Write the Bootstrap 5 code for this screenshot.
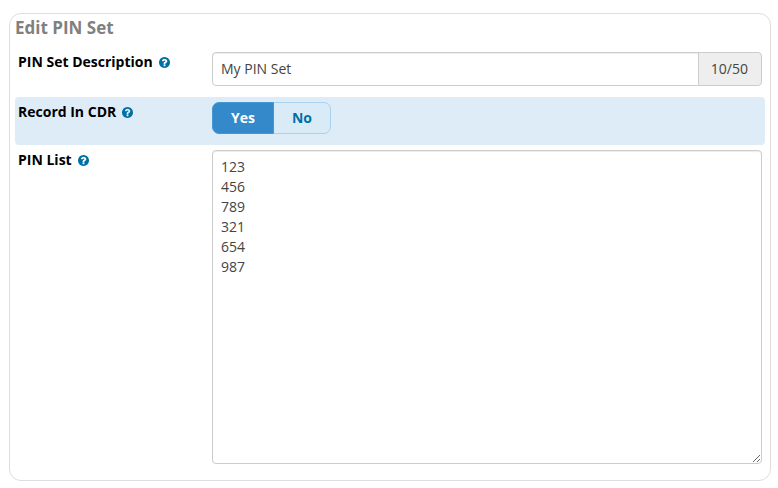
<!DOCTYPE html>
<html lang="en">
<head>
<meta charset="utf-8">
<meta name="viewport" content="width=device-width, initial-scale=1">
<title>Edit PIN Set</title>
<link href="https://cdn.jsdelivr.net/npm/bootstrap@5.3.0/dist/css/bootstrap.min.css" rel="stylesheet">
<style>
body { font-family: "Open Sans", "Noto Sans", sans-serif; font-size: 14px; line-height: 20px; color: #000; padding: 13px 7px 7px 9px; }
.pin-panel { border: 1px solid #ddd; border-radius: 12px; padding: 4px 5px 11px; }
.pin-title { font-size: 17px; line-height: 20px; font-weight: 700; color: #808080; margin-bottom: 9px; }
.pin-row { padding: 5px 3px; border-radius: 4px; }
.pin-row-active { background: #deecf7; height: 48px; margin-top: 6px; }
.pin-label { flex: 0 0 194px; }
.pin-label label, .pin-label .pin-legend { font-weight: 700; }
.help-link { color: #0070a3; margin-left: 6px; line-height: 0; }
.form-control, .input-group-text { font-size: 14px; line-height: 20px; color: #444; border-color: #ccc; border-radius: 4px; }
.form-control { padding: 6px 8px; box-shadow: inset 0 1px 1px rgba(0,0,0,.075); }
.input-group-text { background: #eee; padding: 6px 13px 6px 12px; }
.pin-toggle .btn { font-size: 14px; line-height: 20px; font-weight: 700; padding: 5px 18px; border-radius: 7px; color: #0070a3; background: #daebf8; border-color: #a9d2ee; }
.pin-toggle .btn-check:checked + .btn { color: #fff; background: #3389c9; border-color: #4597d3; }
</style>
<script src="https://cdn.jsdelivr.net/npm/bootstrap@5.3.0/dist/js/bootstrap.bundle.min.js" defer></script>
</head>
<body>
<svg class="d-none" aria-hidden="true">
  <symbol id="help" viewBox="128 128 1536 1536"><path fill="currentColor" d="M1024 1376v-192q0-14-9-23t-23-9h-192q-14 0-23 9t-9 23v192q0 14 9 23t23 9h192q14 0 23-9t9-23zm256-672q0-88-55.500-163t-138.500-116-170-41q-243 0-371 213-15 24 8 42l132 100q7 6 19 6 16 0 25-12 53-68 86-92 34-24 86-24 48 0 85.500 26t37.500 59q0 38-20 61t-68 45q-63 28-115.500 86.500t-52.500 125.500v36q0 14 9 23t23 9h192q14 0 23-9t9-23q0-19 21.500-49.500t54.500-49.500q32-18 49-28.500t46-35 44.500-48 28-60.500 12.500-81zm384 192q0 209-103 385.500t-279.500 279.500-385.500 103-385.500-103-279.500-279.500-103-385.500 103-385.500 279.500-279.500 385.500-103 385.500 103 279.500 279.500 103 385.500z"/></symbol>
</svg>
<main class="pin-panel">
  <h1 class="pin-title">Edit PIN Set</h1>
  <form>
    <div class="pin-row d-flex">
      <div class="pin-label d-flex align-items-center align-self-start">
        <label for="description">PIN Set Description</label>
        <a class="help-link" href="#description" aria-label="Help for PIN Set Description"><svg width="11" height="11"><use href="#help"/></svg></a>
      </div>
      <div class="input-group flex-fill">
        <input type="text" class="form-control" id="description" value="My PIN Set" maxlength="50">
        <span class="input-group-text">10/50</span>
      </div>
    </div>
    <div class="pin-row pin-row-active d-flex align-items-start" role="group" aria-labelledby="record">
      <div class="pin-label d-flex align-items-center">
        <span class="pin-legend" id="record">Record In CDR</span>
        <a class="help-link" href="#record" aria-label="Help for Record In CDR"><svg width="11" height="11"><use href="#help"/></svg></a>
      </div>
      <div class="btn-group pin-toggle">
        <input type="radio" class="btn-check" name="cdr" id="yes" checked>
        <label class="btn" for="yes">Yes</label>
        <input type="radio" class="btn-check" name="cdr" id="no">
        <label class="btn" for="no">No</label>
      </div>
    </div>
    <div class="pin-row d-flex">
      <div class="pin-label d-flex align-items-center align-self-start">
        <label for="pins">PIN List</label>
        <a class="help-link" href="#pins" aria-label="Help for PIN List"><svg width="11" height="11"><use href="#help"/></svg></a>
      </div>
      <textarea class="form-control" id="pins" rows="15">123
456
789
321
654
987</textarea>
    </div>
  </form>
</main>
</body>
</html>
